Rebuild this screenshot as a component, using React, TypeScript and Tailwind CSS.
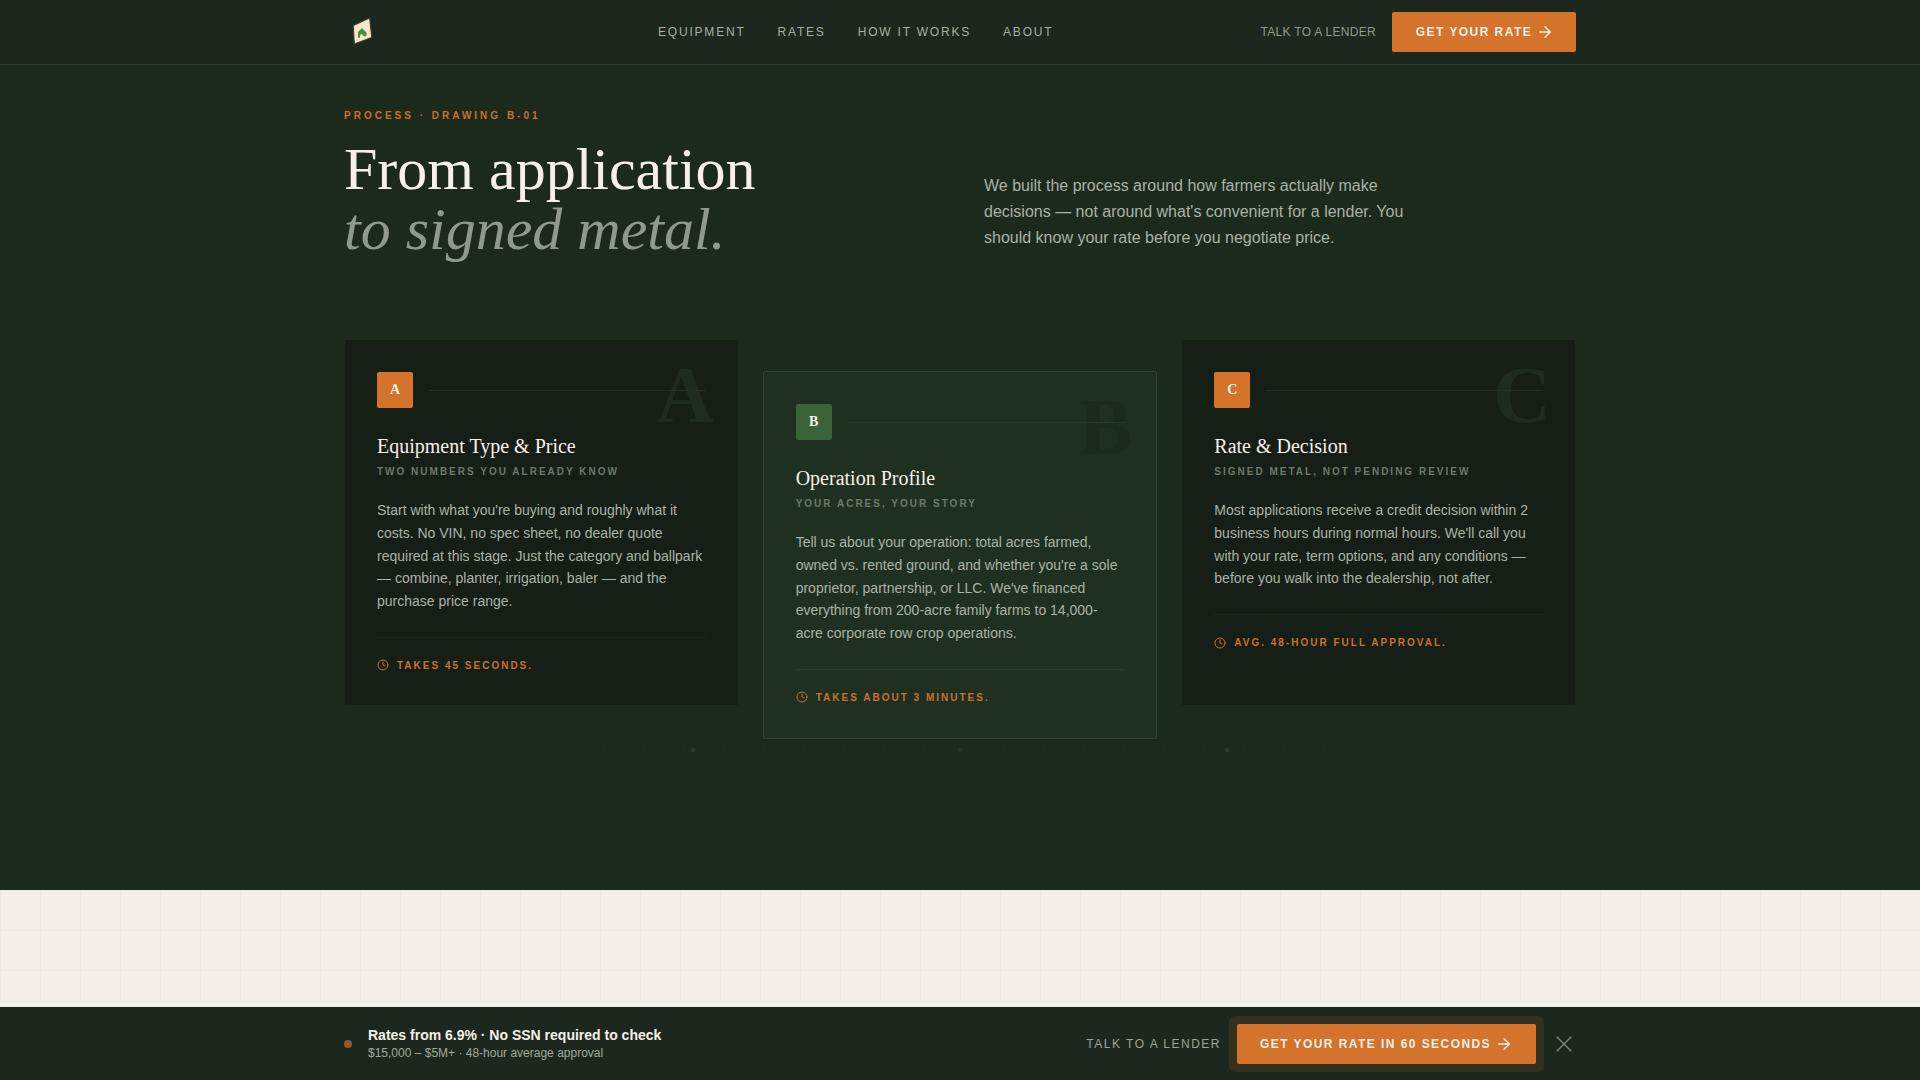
import { ArrowRight, Clock, X } from "lucide-react";

const sans = "font-['Liberation_Sans',Arial,sans-serif]";
const serif = "font-['Liberation_Serif','Times_New_Roman',serif]";

function Logo() {
  return (
    <svg width="26" height="30" viewBox="0 0 26 30" className="shrink-0">
      <path d="M21 2 L23 20 L7 26 L6 9 Z" fill="#f3e8c8" stroke="#7a6a4a" strokeWidth="2.5" strokeOpacity="0.45" />
      <path d="M21 2 L23 20 L7 26 L6 9 Z" fill="#f3e8c8" />
      <path d="M14 11 L18.5 15.5 V19 L16 19.5 L14 17 L12 18 V20.5 L10 21 V15 Z" fill="#4f8a45" />
    </svg>
  );
}

function Connector() {
  const ticks = [];
  for (let x = 3; x <= 723; x += 40) ticks.push(x);
  return (
    <svg width="800" height="14" viewBox="0 0 800 14" className="pointer-events-none absolute top-[404px] left-[256px]">
      {ticks.map((x) => (
        <rect key={x} x={x} y="4" width="1" height="6" fill="#222f22" />
      ))}
      <circle cx="93" cy="7" r="2.5" fill="#2a3a2b" />
      <circle cx="360" cy="7" r="2.5" fill="#273828" />
      <circle cx="627" cy="7" r="2.5" fill="#2a3a2b" />
    </svg>
  );
}

type CardProps = {
  letter: string;
  title: string;
  sub: string;
  body: string;
  foot: string;
  featured?: boolean;
};

function Card({ letter, title, sub, body, foot, featured }: CardProps) {
  return (
    <article
      className={
        featured
          ? "relative z-10 overflow-hidden rounded-[2px] border border-[#304632] bg-[#203020] p-8 mt-[32px] h-[368px] shadow-[0_3px_0_-1px_#1a271b]"
          : "relative z-10 overflow-hidden rounded-[2px] border border-[#1c2a1c] bg-[#161f16] p-8 h-[367px]"
      }
    >
      <span
        className={
          (featured ? "text-[#1b2a1c] " : "text-[#1e2b1f] ") +
          serif +
          " absolute top-[15px] right-[24px] text-[80px] leading-[80px] font-bold"
        }
      >
        {letter}
      </span>
      <div className="relative flex items-center gap-4">
        <span
          className={
            (featured ? "bg-[#3a6339] " : "bg-[#d4732c] ") +
            serif +
            " flex h-9 w-9 items-center justify-center rounded-[2px] text-sm font-bold text-[#f5f1e8]"
          }
        >
          {letter}
        </span>
        <span className={(featured ? "bg-[#263828]" : "bg-[#222f23]") + " h-px flex-1"} />
      </div>
      <h3 className={serif + " relative mt-[24px] text-[20px] leading-[28px] font-normal text-[#f5f1e8]"}>{title}</h3>
      <p className={sans + " mt-[4px] text-[10px] leading-[15px] font-bold tracking-[0.2em] uppercase text-[#6b7a6a]"}>{sub}</p>
      <p className={sans + " mt-[20px] text-[14px] leading-[22.75px] text-[#a9b3a5]"}>{body}</p>
      <div className={(featured ? "border-[#283a2a] " : "border-[#1c281d] ") + "mt-[24px] flex items-center gap-2 border-t pt-[20px]"}>
        <Clock size={12} className="text-[#c9702e]" strokeWidth={2} />
        <span className={sans + " text-[10px] leading-[15px] font-bold tracking-[0.2em] uppercase text-[#c9702e]"}>{foot}</span>
      </div>
    </article>
  );
}

export default function App() {
  return (
    <div className={sans + " flex h-[1080px] w-full flex-col overflow-hidden bg-[#1c2a1c]"}>
      <header className="h-[65px] shrink-0 border-b border-[#2b3d2d] bg-[#1c281d]">
        <div className="mx-auto flex h-16 w-[1232px] items-center">
          <div className="w-[314px] pl-[4px]">
            <Logo />
          </div>
          <nav className="flex items-center gap-8 text-[12px] tracking-[0.15em] text-[#a7b0a3] uppercase">
            <a>Equipment</a>
            <a>Rates</a>
            <a>How it works</a>
            <a>About</a>
          </nav>
          <div className="ml-auto flex items-center gap-4">
            <a className="text-[12px] tracking-[0.025em] text-[#8e998c] uppercase">Talk to a lender</a>
            <a className="flex h-10 w-[184px] items-center justify-center gap-[4px] rounded-[2px] bg-[#d4732c] pl-[2px] text-[12px] font-bold tracking-[0.12em] text-[#f5f1e8] uppercase">
              Get your rate <ArrowRight size={18} />
            </a>
          </div>
        </div>
      </header>

      <main className="flex-1">
        <div className="relative mx-auto w-[1232px]">
          <p className="mt-[43px] text-[10px] leading-[15px] font-bold tracking-[0.3em] text-[#c9702e] uppercase">Process · Drawing B-01</p>
          <div className="mt-[16px] flex items-center">
            <h1 className={serif + " w-[640px] text-[60px] leading-[60px] font-normal text-[#f5f1e8]"}>
              From application
              <br />
              <em className="text-[#8f9a8b]">to signed metal.</em>
            </h1>
            <p className="mt-[26px] w-[440px] text-[16px] leading-[26px] text-[#a9b3a5]">
              We built the process around how farmers actually make decisions — not around what's convenient for a lender. You should know your rate before you negotiate price.
            </p>
          </div>
          <div className="relative mt-[80px] grid grid-cols-3 items-start gap-6">
            <Connector />
            <Card
              letter="A"
              title="Equipment Type & Price"
              sub="Two numbers you already know"
              body="Start with what you're buying and roughly what it costs. No VIN, no spec sheet, no dealer quote required at this stage. Just the category and ballpark — combine, planter, irrigation, baler — and the purchase price range."
              foot="Takes 45 seconds."
            />
            <Card
              featured
              letter="B"
              title="Operation Profile"
              sub="Your acres, your story"
              body="Tell us about your operation: total acres farmed, owned vs. rented ground, and whether you're a sole proprietor, partnership, or LLC. We've financed everything from 200-acre family farms to 14,000-acre corporate row crop operations."
              foot="Takes about 3 minutes."
            />
            <Card
              letter="C"
              title="Rate & Decision"
              sub="Signed metal, not pending review"
              body="Most applications receive a credit decision within 2 business hours during normal hours. We'll call you with your rate, term options, and any conditions — before you walk into the dealership, not after."
              foot="Avg. 48-hour full approval."
            />
          </div>
        </div>
      </main>

      <section className="flex h-[117px] shrink-0 flex-col justify-end bg-[#f4f0e8] bg-[linear-gradient(#eeeae0_1px,transparent_1px),linear-gradient(90deg,#eeeae0_1px,transparent_1px)] bg-[size:40px_40px]">
        <div className="h-[6px] border-y border-[#ece8dc] bg-[#f7f4ec]" />
      </section>

      <footer className="h-[73px] shrink-0 bg-[#1c281d]">
        <div className="mx-auto flex h-full w-[1232px] items-center justify-between">
          <div className="flex items-center gap-4">
            <span className="h-2 w-2 rounded-full bg-[#8f5a2a]" />
            <div>
              <p className="text-[14px] leading-[19px] font-bold text-[#f5f1e8]">Rates from 6.9% · No SSN required to check</p>
              <p className="text-[12px] leading-[17px] text-[#a0aa9c]">$15,000 – $5M+ · 48-hour average approval</p>
            </div>
          </div>
          <div className="flex items-center">
            <a className="text-[12px] tracking-[0.125em] text-[#9aa597] uppercase">Talk to a lender</a>
            <a className="ml-[16px] flex h-10 w-[299px] items-center justify-center gap-[4px] rounded-[2px] bg-[#d4732c] text-[12px] font-bold tracking-[0.12em] text-[#f5f1e8] uppercase shadow-[0_0_0_8px_rgba(212,115,44,0.13)]">
              Get your rate in 60 seconds <ArrowRight size={18} />
            </a>
            <X size={28} strokeWidth={1} className="mr-[-2px] ml-[14px] text-[#7f8c7c]" />
          </div>
        </div>
      </footer>
    </div>
  );
}
